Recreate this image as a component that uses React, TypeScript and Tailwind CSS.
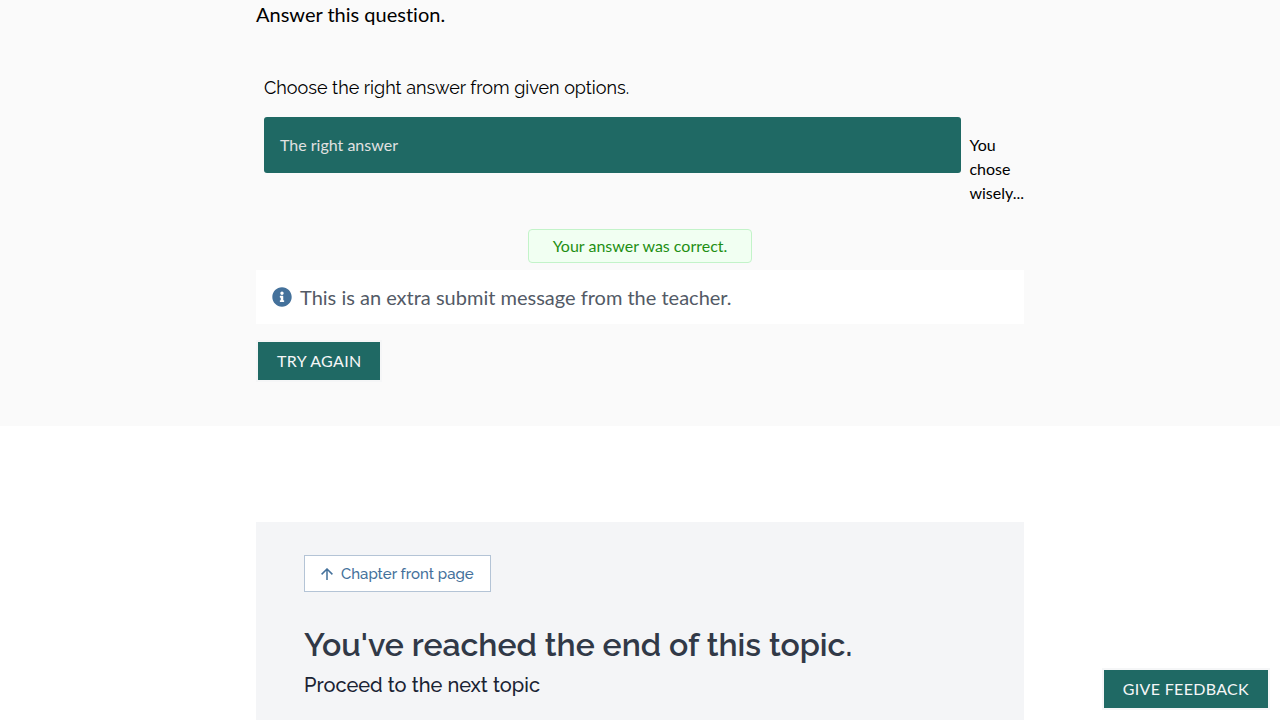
import React from "react";

const heading = "font-[Raleway,Lato,sans-serif]";

function InfoIcon() {
  return (
    <svg viewBox="0 0 512 512" className="h-5 w-5 shrink-0 fill-[#44719b]" aria-hidden="true">
      <path d="M256 8C119.043 8 8 119.083 8 256c0 136.997 111.043 248 248 248s248-111.003 248-248C504 119.083 392.957 8 256 8zm0 110c23.196 0 42 18.804 42 42s-18.804 42-42 42-42-18.804-42-42 18.804-42 42-42zm56 254c0 6.627-5.373 12-12 12h-88c-6.627 0-12-5.373-12-12v-24c0-6.627 5.373-12 12-12h12v-64h-12c-6.627 0-12-5.373-12-12v-24c0-6.627 5.373-12 12-12h64c6.627 0 12 5.373 12 12v100h12c6.627 0 12 5.373 12 12v24z" />
    </svg>
  );
}

function ArrowUpIcon() {
  return (
    <svg viewBox="0 0 12 12" className="h-3 w-3 shrink-0" fill="none" stroke="currentColor" strokeWidth="1.5" aria-hidden="true">
      <path d="M6 12V1M0.6 6.4L6 1l5.4 5.4" />
    </svg>
  );
}

function PrimaryButton({ children }: { children: React.ReactNode }) {
  return (
    <button
      type="button"
      className="border-2 border-[#f5f6f7] bg-[#1f6964] px-[19px] py-[7px] text-base leading-6 tracking-[0.02em] text-[#f5f6f7] uppercase"
    >
      {children}
    </button>
  );
}

export default function App() {
  return (
    <div className="min-h-screen bg-white font-[Lato,sans-serif] text-black [font-variant-ligatures:none]">
      <section className="bg-[#fafafa] pb-11">
        <div className="mx-auto max-w-3xl">
          <p className="text-xl leading-7">Answer this question.</p>
          <div className="mt-[46px] pl-2">
            <h2 className={`${heading} text-lg leading-7`}>Choose the right answer from given options.</h2>
            <div className="mt-[15px] flex items-start gap-2">
              <button
                type="button"
                disabled
                className="h-14 flex-1 rounded-[3px] bg-[#1f6964] px-4 text-left text-base text-[#e1e1e1]"
              >
                The right answer
              </button>
              <p className="mt-4 w-min text-base leading-6">You chose wisely...</p>
            </div>
          </div>
          <div className="mt-6 flex justify-center">
            <p className="rounded border border-[#c3f3c9] bg-[#f1fff2] px-6 py-1 text-base leading-6 text-[#1f8f14]">
              Your answer was correct.
            </p>
          </div>
          <div className="mt-[7px] flex items-center gap-2 bg-white px-4 py-3 text-xl leading-[30px] text-[#535a66]">
            <InfoIcon />
            <p>This is an extra submit message from the teacher.</p>
          </div>
          <div className="mt-4 flex">
            <PrimaryButton>Try again</PrimaryButton>
          </div>
        </div>
      </section>

      <section className="mx-auto mt-24 max-w-3xl bg-[#f4f5f7] px-12 pt-[33px] pb-10">
        <a
          href="#chapter"
          className={`${heading} inline-flex h-[37px] items-center gap-2 border border-[#b4c4d6] bg-white px-4 text-[15px] leading-5 font-medium text-[#44719b]`}
        >
          <ArrowUpIcon />
          Chapter front page
        </a>
        <h2 className={`${heading} mt-[34px] text-[32px] leading-[38px] font-semibold text-[#313947]`}>
          You've reached the end of this topic.
        </h2>
        <p className={`${heading} mt-[7px] text-xl leading-7 font-medium text-[#1a2333]`}>Proceed to the next topic</p>
      </section>

      <div className="fixed right-[10px] bottom-[10px] flex">
        <PrimaryButton>Give feedback</PrimaryButton>
      </div>
    </div>
  );
}
